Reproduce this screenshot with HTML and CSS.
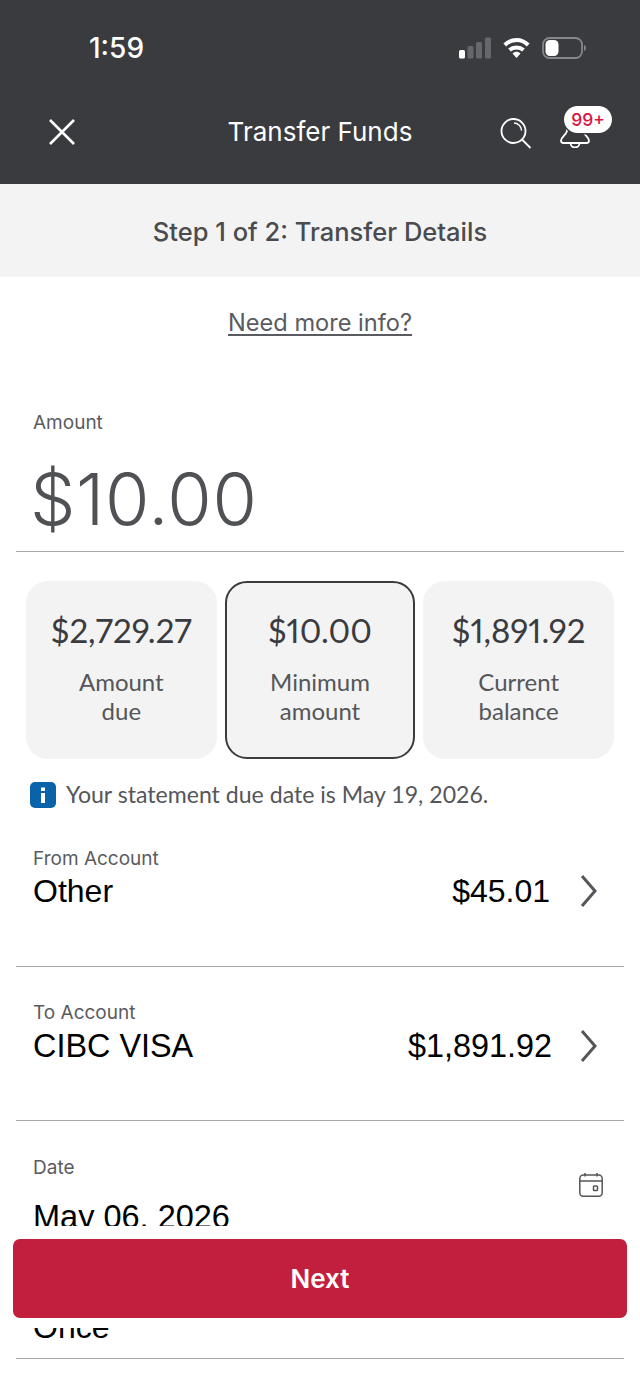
FILE: index.html
```html
<!DOCTYPE html>
<html lang="en">
<head>
<meta charset="utf-8">
<title>Transfer Funds</title>
<link rel="stylesheet" href="styles.css">
</head>
<body>
<div class="screen">
  <header class="header">
    <div class="status">
      <span class="time">1:59</span>
      <div class="status-icons">
        <svg class="signal" width="32" height="22" viewBox="0 0 32 22"><rect x="0" y="13" width="6" height="8.500" rx="1.500" fill="#fff"/><rect x="8.500" y="9" width="6" height="12.500" rx="1.500" fill="#66676a"/><rect x="17" y="5" width="6" height="16.500" rx="1.500" fill="#66676a"/><rect x="26" y="0.500" width="6" height="21" rx="1.500" fill="#66676a"/></svg>
        <svg class="wifi" width="27" height="22" viewBox="0 0 27 22"><path d="M1.800 8C8.500 1.300 18.500 1.300 25.200 8" fill="none" stroke="#fff" stroke-width="4"/><path d="M6.500 13C10.500 9.500 16.500 9.500 20.500 13" fill="none" stroke="#fff" stroke-width="4"/><path d="M9.500 16.500C12 14.300 15 14.300 17.500 16.500L13.500 21Z" fill="#fff"/></svg>
        <svg class="battery" width="45" height="22" viewBox="0 0 45 22"><rect x="1" y="1" width="39" height="20" rx="6.500" fill="none" stroke="#85868a" stroke-width="1.800"/><rect x="3.500" y="3" width="13" height="16" rx="4.500" fill="#fff"/><path d="M42 8C44.500 8.500 44.500 13.500 42 14Z" fill="#85868a"/></svg>
      </div>
    </div>
    <nav class="nav">
      <svg class="close" width="28" height="28" viewBox="0 0 28 28"><path d="M2 2L26 26M26 2L2 26" stroke="#fff" stroke-width="2.600" fill="none"/></svg>
      <h1 class="title">Transfer Funds</h1>
      <svg class="search" width="32" height="31" viewBox="0 0 32 31"><circle cx="13.500" cy="13" r="12" fill="none" stroke="#fff" stroke-width="1.800"/><path d="M22 21.500L30.500 30" stroke="#fff" stroke-width="1.800" fill="none"/><path d="M14 5C18 5 21.500 8.500 21.500 12.500" stroke="#fff" stroke-width="1.500" fill="none"/></svg>
      <div class="bell-wrap">
        <svg class="bell" width="30" height="36" viewBox="0 0 30 36"><path d="M7 8V19C6 23 1 25 1 28.500C1 30 2 31 3.500 31H26.500C28 31 29 30 29 28.500C29 25 24 23 23 19V8" fill="none" stroke="#fff" stroke-width="1.800"/><path d="M10.500 31C10.500 37 19.500 37 19.500 31" fill="none" stroke="#fff" stroke-width="1.800"/></svg>
        <span class="badge">99+</span>
      </div>
    </nav>
  </header>
  <div class="stepbar">Step 1 of 2: Transfer Details</div>
  <main>
    <div class="more"><a class="more-link" href="#">Need more info?</a></div>
    <section class="amount">
      <div class="label">Amount</div>
      <div class="amount-value">$10.00</div>
    </section>
    <section class="cards">
      <div class="card"><div class="card-value">$2,729.27</div><div class="card-label">Amount<br>due</div></div>
      <div class="card card-selected"><div class="card-value">$10.00</div><div class="card-label">Minimum<br>amount</div></div>
      <div class="card"><div class="card-value">$1,891.92</div><div class="card-label">Current<br>balance</div></div>
    </section>
    <div class="notice">
      <svg class="info" width="26" height="26" viewBox="0 0 26 26"><rect x="0" y="0" width="26" height="26" rx="5" fill="#0a62a8"/><rect x="11" y="5.500" width="4" height="3.500" fill="#fff"/><rect x="11" y="11" width="4" height="10" fill="#fff"/></svg>
      <span class="notice-text">Your statement due date is May 19, 2026.</span>
    </div>
    <div class="row row-from">
      <div class="label">From Account</div>
      <div class="row-line"><span>Other</span><span class="row-end"><span>$45.01</span><svg class="chev" width="18" height="34" viewBox="0 0 18 34"><path d="M2 2L15 17L2 32" fill="none" stroke="#55565a" stroke-width="3"/></svg></span></div>
    </div>
    <div class="row row-to">
      <div class="label">To Account</div>
      <div class="row-line"><span>CIBC VISA</span><span class="row-end"><span>$1,891.92</span><svg class="chev" width="18" height="34" viewBox="0 0 18 34"><path d="M2 2L15 17L2 32" fill="none" stroke="#55565a" stroke-width="3"/></svg></span></div>
    </div>
    <div class="row row-date">
      <div class="date-head">
        <div class="label">Date</div>
        <svg class="cal" width="24" height="24" viewBox="0 0 24 24"><rect x="0.800" y="2" width="22.400" height="21.200" rx="3.500" fill="none" stroke="#55565a" stroke-width="1.500"/><path d="M0.800 8H23.200M6 0V3.500M18 0V3.500" stroke="#55565a" stroke-width="1.500" fill="none"/><rect x="14.500" y="13" width="4" height="4.500" rx="0.800" fill="none" stroke="#55565a" stroke-width="1.500"/></svg>
      </div>
      <div class="row-line date-line"><span>May 06, 2026</span></div>
    </div>
    <div class="row row-freq">
      <div class="label">Frequency</div>
      <div class="row-line"><span>Once</span></div>
    </div>
  </main>
  <div class="footer"><button class="next" type="button">Next</button></div>
</div>
</body>
</html>
```
FILE: styles.css
```css
* { box-sizing: border-box; }
html, body { margin: 0; padding: 0; background: #fff; }
.screen { position: relative; width: 640px; height: 1387px; overflow: hidden; background: #fff; font-family: Inter, sans-serif; }
.header { height: 184px; background: #3a3b3f; color: #fff; }
.status { height: 94px; padding: 33px 53px 0 89px; display: flex; justify-content: space-between; align-items: flex-start; }
.time { font-size: 28px; line-height: 30px; font-weight: 500; }
.status-icons { display: flex; align-items: center; gap: 12px; padding-top: 4px; }
.nav { height: 90px; position: relative; display: flex; align-items: center; padding: 0 48px; }
.close { flex: none; margin-top: -14px; }
.title { position: absolute; left: 0; right: 0; top: 19px; margin: 0; text-align: center; font-size: 26px; line-height: 38px; font-weight: 400; }
.search { flex: none; margin-left: auto; margin-top: -12px; margin-right: 28px; }
.bell-wrap { position: relative; width: 30px; height: 36px; margin-right: 2px; margin-top: -18px; }
.badge { position: absolute; left: 4px; top: -6px; width: 48px; height: 27px; border-radius: 14px; background: #fff; color: #d6173f; font-size: 17.500px; line-height: 27px; font-weight: 500; text-align: center; box-shadow: 0 0 0 1.500px #3a3b3f; }
.stepbar { height: 93px; background: #f3f3f3; color: #4a4b4f; font-size: 25.500px; line-height: 95px; text-align: center; font-weight: 450; }
.more { padding-top: 29px; text-align: center; font-size: 23.600px; line-height: 34px; }
.more-link { color: #5a5b60; text-decoration: underline; text-underline-offset: 3px; }
.label { color: #5a5b60; font-size: 19px; line-height: 24px; }
.amount { margin: 71px 16px 0; border-bottom: 1px solid #a8a8a8; padding: 0 17px; height: 141px; }
.amount-value { color: #505154; font-size: 72px; line-height: 96px; font-weight: 350; letter-spacing: 0.600px; margin: 16px 0 0 -3px; }
.cards { margin: 29px 26px 0; display: grid; grid-template-columns: repeat(3, 1fr); gap: 8px; }
.card { height: 178px; border-radius: 22px; background: #f3f3f3; text-align: center; padding-top: 28px; }
.card-selected { border: 2px solid #3a3b3f; padding-top: 26px; }
.card-value { font-family: Lato, sans-serif; font-size: 33px; line-height: 42px; color: #3a3b3f; font-variant-numeric: proportional-nums; }
.card-label { font-family: Lato, sans-serif; font-size: 24px; line-height: 29px; color: #55565a; margin-top: 16px; }
.notice { margin: 23px 30px 0; display: flex; align-items: center; gap: 10px; height: 26px; font-family: Lato, sans-serif; color: #55565a; font-size: 23.100px; white-space: nowrap; }
.notice-text { position: relative; top: -1px; }
.row { margin: 0 16px; padding: 0 17px; border-bottom: 1px solid #a8a8a8; }
.row-line { display: flex; justify-content: space-between; align-items: center; font-family: "Liberation Sans", sans-serif; font-size: 32px; line-height: 38px; color: #000; margin-top: 1px; }
.row-end { display: flex; align-items: center; gap: 30px; }
.chev { flex: none; margin-right: 9px; }
.row-from { height: 120px; margin-top: 39px; }
.row-to { height: 154px; padding-top: 34px; }
.row-to .row-line { font-size: 32.400px; margin-top: 2px; }
.row-to .row-end { gap: 28px; }
.row-date { height: 133px; padding-top: 35px; }
.date-head { display: flex; justify-content: space-between; align-items: flex-start; }
.cal { flex: none; margin: 17px 4px 0 0; }
.row-line.date-line { margin-top: 1px; font-size: 32.500px; }
.row-freq { height: 105px; padding-top: 20px; }
.row-freq .row-line { margin-top: 10px; }
.footer { position: absolute; left: 0; right: 0; top: 1226px; height: 102px; background: #fff; padding: 13px 13px 0; }
.next { display: block; width: 100%; height: 79px; border: 0; border-radius: 7px; background: #c21f3e; color: #fff; font-family: Inter, sans-serif; font-size: 26px; font-weight: 600; }
```
